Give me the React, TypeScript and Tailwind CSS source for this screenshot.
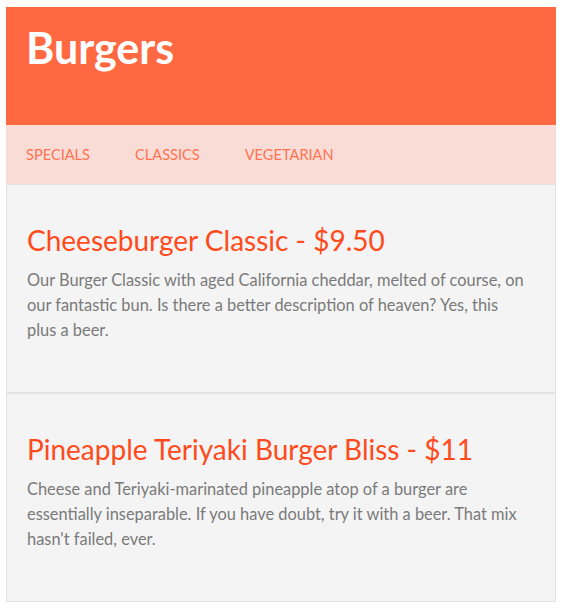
const items = [
  {
    title: "Cheeseburger Classic - $9.50",
    lines: [
      "Our Burger Classic with aged California cheddar, melted of course, on",
      "our fantastic bun. Is there a better description of heaven? Yes, this",
      "plus a beer.",
    ],
  },
  {
    title: "Pineapple Teriyaki Burger Bliss - $11",
    lines: [
      "Cheese and Teriyaki-marinated pineapple atop of a burger are",
      "essentially inseparable. If you have doubt, try it with a beer. That mix",
      "hasn't failed, ever.",
    ],
  },
];

export default function App() {
  return (
    <div className="min-h-screen bg-white pt-[7px] pl-[6px] font-['Lato',sans-serif]">
      <div className="w-[550px]">
        <header className="h-[118px] bg-[#ff6941] px-5 pt-[15px]">
          <h1 className="text-[43px] leading-[52px] font-bold text-white">Burgers</h1>
        </header>
        <nav className="flex h-[59px] items-center gap-[45px] bg-[#fadcd6] px-5 text-[14.6px] uppercase text-[#ff7352]">
          <a href="#specials">Specials</a>
          <a href="#classics">Classics</a>
          <a href="#vegetarian">Vegetarian</a>
        </nav>
        <div className="border-t border-[#e2e2e2]">
          {items.map((item) => (
            <section
              key={item.title}
              className="border-x border-b-2 border-[#e2e2e2] bg-[#f4f4f4] px-5 pt-[38px] pb-[50px] last:border-b"
            >
              <h2 className="text-[28px] leading-[34px] text-[#ff4a1c]">{item.title}</h2>
              <p className="mt-[10px] text-[16.4px] leading-[25px] whitespace-nowrap text-[#7a7a7a]">
                {item.lines.map((line, i) => (
                  <span key={i} className="block">
                    {line}
                  </span>
                ))}
              </p>
            </section>
          ))}
        </div>
      </div>
    </div>
  );
}
